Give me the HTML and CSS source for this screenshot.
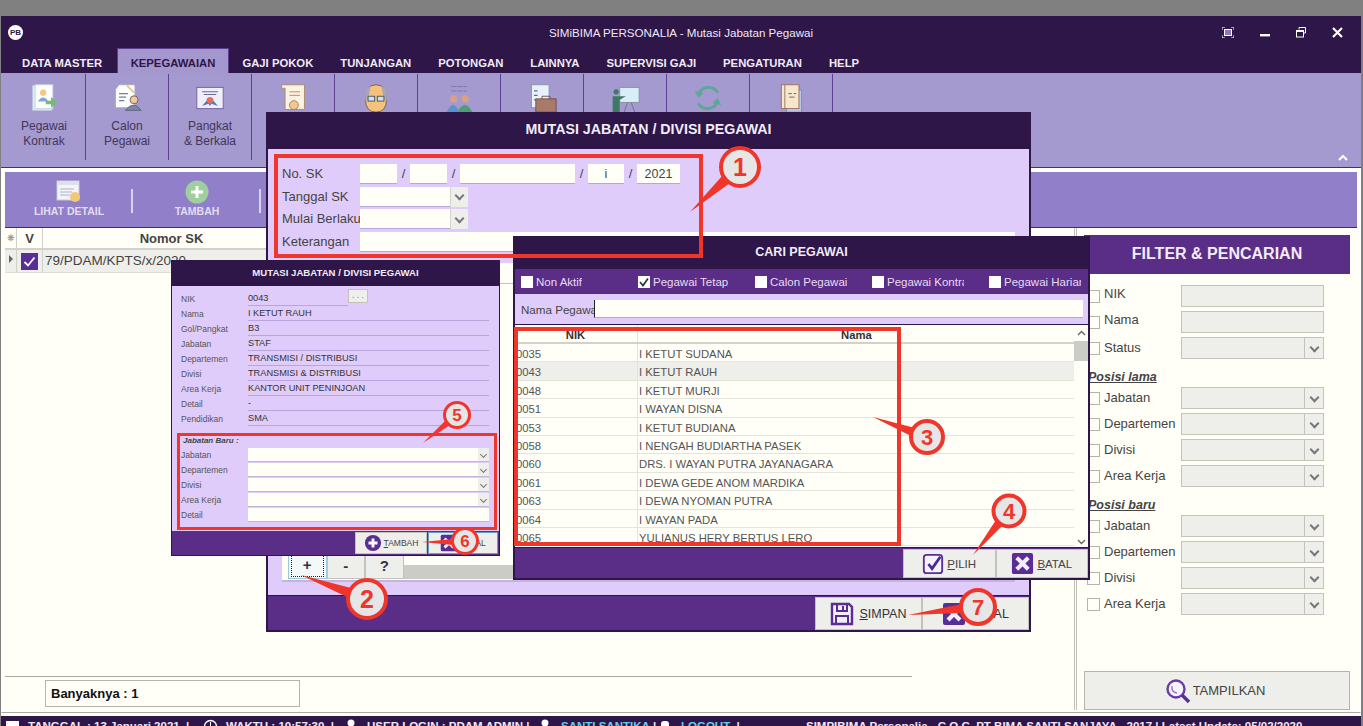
FILE: index.html
```html
<!DOCTYPE html>
<html lang="en">
<head>
  <meta charset="UTF-8">
  <title>SIMiBIMA PERSONALIA - Mutasi Jabatan Pegawai</title>
  <link rel="stylesheet" href="styles.css">
</head>

<body>
  <svg class="sprite">
    <symbol id="ico-x" viewBox="0 0 24 24">
      <rect x="1" y="1" width="22" height="22" rx="2" fill="#5a2d96"/>
      <path d="M6 6 L18 18 M18 6 L6 18" stroke="#f2eefa" stroke-width="4.2" fill="none"/>
    </symbol>
    <symbol id="ico-plus" viewBox="0 0 20 20">
      <circle cx="10" cy="10" r="9" fill="#5a2d96"/>
      <path d="M10 5 V15 M5 10 H15" stroke="#fff" stroke-width="3.2"/>
    </symbol>
    <symbol id="ico-check" viewBox="0 0 24 24">
      <rect x="2" y="2" width="20" height="20" rx="3" fill="#f4f2fa" stroke="#5a2d96" stroke-width="2"/>
      <path d="M7 12 L11 17 L20 4" stroke="#4a2a96" stroke-width="3" fill="none"/>
    </symbol>
    <symbol id="ico-save" viewBox="0 0 24 24">
      <path d="M2 2 H19 L22 5 V22 H2 Z" fill="#f2eefa" stroke="#5a2d96" stroke-width="2.4"/>
      <path d="M7 3 V9 H17 V3" fill="none" stroke="#5a2d96" stroke-width="2"/>
      <path d="M13 4 V8" stroke="#5a2d96" stroke-width="2"/>
      <path d="M6 22 V14 H18 V22" fill="none" stroke="#5a2d96" stroke-width="2"/>
    </symbol>
  </svg>

  <div class="app">
    <div class="titlebar">
      <div class="logo">PB</div>
      <div class="app-title">SIMiBIMA PERSONALIA - Mutasi Jabatan Pegawai</div>
      <div class="win-btns">
        <svg width="12" height="11" viewBox="0 0 12 11"><path d="M0 3 V0 H3 M9 0 H12 V3 M12 8 V11 H9 M3 11 H0 V8" fill="none" stroke="#fff"/><rect x="2.5" y="2.5" width="7" height="6" fill="#8a78b0" stroke="#fff"/></svg>
        <svg width="10" height="11" viewBox="0 0 10 11"><rect x="0" y="7" width="10" height="2.4" fill="#fff"/></svg>
        <svg width="10" height="11" viewBox="0 0 10 11"><path d="M3 2.5 V0.5 H9.5 V6 H7.5" fill="none" stroke="#fff"/><rect x="0.5" y="3.5" width="7" height="6.5" fill="none" stroke="#fff"/><rect x="0" y="3" width="8" height="2" fill="#fff"/></svg>
        <svg width="11" height="11" viewBox="0 0 11 11"><path d="M1 1 L10 10 M10 1 L1 10" stroke="#fff" stroke-width="2.2"/></svg>
      </div>
    </div>

    <div class="tabs">
      <div class="tab">DATA MASTER</div>
      <div class="tab active">KEPEGAWAIAN</div>
      <div class="tab">GAJI POKOK</div>
      <div class="tab">TUNJANGAN</div>
      <div class="tab">POTONGAN</div>
      <div class="tab">LAINNYA</div>
      <div class="tab">SUPERVISI GAJI</div>
      <div class="tab">PENGATURAN</div>
      <div class="tab">HELP</div>
    </div>

    <div class="ribbon">
      <div class="rb-item">
        <svg class="rb-icon" viewBox="0 0 34 34">
          <rect x="4" y="3" width="22" height="28" fill="#dfe8f5" stroke="#b9c8dd"/>
          <rect x="7" y="2" width="20" height="27" fill="#fdfdfb" stroke="#c9d4e4"/>
          <circle cx="16" cy="11" r="3.5" fill="#f5c77e"/>
          <path d="M10 21 Q16 12 22 21 Z" fill="#7ea6d8"/>
          <path d="M19 20 H25 V16 L32 22 L25 28 V24 H19 Z" fill="#79b77a"/>
        </svg>
        <div class="rb-label">Pegawai<br>Kontrak</div>
      </div>
      <div class="rb-item">
        <svg class="rb-icon" viewBox="0 0 34 34">
          <path d="M8 2 H26 V28 H4 V7 Z" fill="#fdfdfb" stroke="#aab"/>
          <path d="M8 12 H18 M8 16 H16 M8 20 H14" stroke="#6b7fa8" stroke-width="1.3"/>
          <path d="M17 3 L25 11" stroke="#e4c88a" stroke-width="2"/>
          <circle cx="25" cy="19" r="4.5" fill="#f1c9a0" stroke="#6a5a55"/>
          <path d="M15 31 Q25 19 33 31 Z" fill="#7d86a8" stroke="#5c6080"/>
        </svg>
        <div class="rb-label">Calon<br>Pegawai</div>
      </div>
      <div class="rb-item">
        <svg class="rb-icon" viewBox="0 0 34 34">
          <rect x="2" y="5" width="30" height="24" fill="#f0eefa" stroke="#7a6aa8" stroke-width="1.2"/>
          <path d="M8 10 H26 M10 13 H24" stroke="#6a6a90" stroke-width="1.2"/>
          <circle cx="17" cy="20" r="4" fill="#e56f5e"/>
          <path d="M8 26 L13 20 L17 26 L21 20 L26 26 L17 23 Z" fill="#4c7cc7"/>
        </svg>
        <div class="rb-label">Pangkat<br>&amp; Berkala</div>
      </div>
      <div class="rb-item">
        <svg class="rb-icon" viewBox="0 0 34 34">
          <path d="M6 2 H30 V30 H8 V6 H4 Q3 2 6 2 Z" fill="#fbf2df" stroke="#a9876b"/>
          <path d="M13 10 H25 M13 14 H25" stroke="#d66f62" stroke-width="1"/>
          <circle cx="18" cy="25" r="5" fill="#f0c98e" stroke="#b6705e"/>
        </svg>
      </div>
      <div class="rb-item">
        <svg class="rb-icon" viewBox="0 0 34 34">
          <path d="M5 18 Q5 2 17 2 Q29 2 29 18 Q29 33 17 33 Q5 33 5 18 Z" fill="#f5c27e" stroke="#6c5a4c"/>
          <path d="M5 20 Q3 5 11 4 L8 18 Z M29 20 Q31 5 23 4 L26 18 Z" fill="#a8a8b4"/>
          <rect x="8" y="15" width="7.5" height="5.5" fill="#cfe1ea" stroke="#3f4f5e"/>
          <rect x="18.5" y="15" width="7.5" height="5.5" fill="#cfe1ea" stroke="#3f4f5e"/>
        </svg>
      </div>
      <div class="rb-item">
        <svg class="rb-icon" viewBox="0 0 34 34">
          <path d="M8 4 H26 M8 9 H26" stroke="#7d72a8" stroke-width="1" stroke-dasharray="6 1"/>
          <circle cx="11" cy="18" r="4" fill="#d9a183"/>
          <circle cx="24" cy="18" r="4" fill="#d9a183"/>
          <path d="M3 33 Q11 17 17 33 Z" fill="#5b93cf"/>
          <path d="M15 33 Q24 17 32 33 Z" fill="#4f9e78"/>
        </svg>
      </div>
      <div class="rb-item">
        <svg class="rb-icon" viewBox="0 0 34 34">
          <rect x="5" y="2" width="20" height="26" fill="#e9f1fa" stroke="#7f93b8"/>
          <path d="M8 9 H12 M8 14 H12 M8 19 H12" stroke="#4f6aa8" stroke-width="1.4"/>
          <rect x="10" y="18" width="23" height="15" fill="#a97a6a" stroke="#6f4a48"/>
          <path d="M17 18 V15 H26 V18" fill="none" stroke="#6f4a48"/>
        </svg>
      </div>
      <div class="rb-item">
        <svg class="rb-icon" viewBox="0 0 34 34">
          <rect x="11" y="5" width="22" height="17" fill="#d7edf7" stroke="#8c8f9b"/>
          <circle cx="7" cy="10" r="3" fill="#3d7a65"/>
          <path d="M3 33 V15 H12 L18 15 L11 19 V33 Z" fill="#3d7a65"/>
          <path d="M20 22 L16 33 M24 22 L28 33" stroke="#6f6f7b"/>
        </svg>
      </div>
      <div class="rb-item">
        <svg class="rb-icon" viewBox="0 0 34 34">
          <path d="M6 14 A12 12 0 0 1 28 11" fill="none" stroke="#5aa895" stroke-width="3.2"/>
          <path d="M28 20 A12 12 0 0 1 6 23" fill="none" stroke="#5aa895" stroke-width="3.2"/>
          <path d="M2 9 L6 17 L12 11 Z M32 25 L28 17 L22 23 Z" fill="#5aa895"/>
        </svg>
      </div>
      <div class="rb-item">
        <svg class="rb-icon" viewBox="0 0 34 34">
          <rect x="12" y="8" width="17" height="25" fill="#b9c6e8" stroke="#7f8fb8"/>
          <rect x="6" y="2" width="20" height="27" fill="#f4e7cc" stroke="#9a6b5d"/>
          <path d="M10 2 V29" stroke="#9a6b5d"/>
          <path d="M14 12 H18 M20 12 H23 M15 16 H21" stroke="#6d5a55"/>
        </svg>
      </div>
      <svg class="rb-collapse" width="10" height="7" viewBox="0 0 10 7"><path d="M1 6 L5 2 L9 6" fill="none" stroke="#fff" stroke-width="2"/></svg>
    </div>

    <div class="content">
      <div class="toolbar">
        <div class="tool">
          <svg class="tool-icon" width="26" height="24" viewBox="0 0 26 24">
            <rect x="1" y="1" width="22" height="19" fill="#f4f4f8" stroke="#c8c8d8"/>
            <rect x="1" y="1" width="22" height="4" fill="#e0e0ea"/>
            <path d="M4 9 H18 M4 12 H16 M4 15 H14" stroke="#a8b4d0"/>
            <circle cx="19" cy="17" r="5" fill="#f0c878"/>
          </svg>
          <span>LIHAT DETAIL</span>
        </div>
        <div class="tool">
          <svg class="tool-icon" width="24" height="24" viewBox="0 0 24 24">
            <circle cx="12" cy="12" r="11.5" fill="#9fcf9e"/>
            <path d="M12 6 V18 M6 12 H18" stroke="#fff" stroke-width="3"/>
          </svg>
          <span>TAMBAH</span>
        </div>
      </div>

      <div class="work">
        <div class="list-side">
          <div class="grid">
            <div class="grid-head">
              <div class="cell cell-mark">❋</div>
              <div class="cell cell-v">V</div>
              <div class="cell cell-no">Nomor SK</div>
            </div>
            <div class="grid-row">
              <div class="cell cell-mark"><span class="row-arrow"></span></div>
              <div class="cell cell-v">
                <svg width="17" height="17" viewBox="0 0 17 17"><rect width="17" height="17" fill="#5a2d96"/><path d="M3.5 9 L7 12.5 L13.5 4.5" fill="none" stroke="#fff" stroke-width="1.8"/></svg>
              </div>
              <div class="cell cell-no">79/PDAM/KPTS/x/2020</div>
            </div>
          </div>
          <div class="count">Banyaknya : 1</div>
        </div>

        <div class="filter">
          <div class="filter-title">FILTER &amp; PENCARIAN</div>
          <div class="f-row f-row-top"><span class="f-check"></span><span class="f-label">NIK</span><span class="f-box"></span></div>
          <div class="f-row f-row-top"><span class="f-check"></span><span class="f-label">Nama</span><span class="f-box"></span></div>
          <div class="f-row"><span class="f-check"></span><span class="f-label">Status</span><span class="f-box drop"></span></div>
          <div class="f-head">Posisi lama</div>
          <div class="f-row"><span class="f-check"></span><span class="f-label">Jabatan</span><span class="f-box drop"></span></div>
          <div class="f-row"><span class="f-check"></span><span class="f-label">Departemen</span><span class="f-box drop"></span></div>
          <div class="f-row"><span class="f-check"></span><span class="f-label">Divisi</span><span class="f-box drop"></span></div>
          <div class="f-row"><span class="f-check"></span><span class="f-label">Area Kerja</span><span class="f-box drop"></span></div>
          <div class="f-head">Posisi baru</div>
          <div class="f-row"><span class="f-check"></span><span class="f-label">Jabatan</span><span class="f-box drop"></span></div>
          <div class="f-row"><span class="f-check"></span><span class="f-label">Departemen</span><span class="f-box drop"></span></div>
          <div class="f-row"><span class="f-check"></span><span class="f-label">Divisi</span><span class="f-box drop"></span></div>
          <div class="f-row"><span class="f-check"></span><span class="f-label">Area Kerja</span><span class="f-box drop"></span></div>
          <div class="show-btn">
            <svg width="26" height="26" viewBox="0 0 26 26">
              <circle cx="11" cy="11" r="8.5" fill="#f6f4fb" stroke="#6a3aa6" stroke-width="2.4"/>
              <path d="M7 8 Q6 14 12 15" fill="none" stroke="#9a7ac8" stroke-width="1.4"/>
              <path d="M17 17 L24 24" stroke="#5a2d96" stroke-width="3.4"/>
            </svg>
            <span>TAMPILKAN</span>
          </div>
        </div>
      </div>
    </div>

    <div class="statusbar">
      <div class="st st-date"><svg width="15" height="15" viewBox="0 0 15 15"><rect x="1" y="2" width="13" height="12" fill="#fff"/></svg><span>TANGGAL : 13 Januari 2021 &nbsp;|</span></div>
      <div class="st st-time"><svg width="15" height="15" viewBox="0 0 15 15"><circle cx="7.5" cy="7.5" r="6" fill="none" stroke="#fff" stroke-width="1.4"/><path d="M7.5 3 V8" stroke="#fff"/></svg><span>WAKTU : 10:57:30 &nbsp;|</span></div>
      <div class="st st-user"><svg width="15" height="15" viewBox="0 0 15 15"><circle cx="7" cy="4" r="3.5" fill="#fff"/></svg><span>USER LOGIN : PDAM ADMIN |</span></div>
      <div class="st st-name"><svg width="15" height="15" viewBox="0 0 15 15"><circle cx="7" cy="4" r="3.5" fill="#fff"/></svg><span><b class="st-link">SANTI SANTIKA</b> |</span></div>
      <div class="st st-out"><svg width="15" height="15" viewBox="0 0 15 15"><rect x="3" y="2" width="8" height="12" rx="3" fill="#fff"/></svg><span><b class="st-link">LOGOUT</b> &nbsp;|</span></div>
      <div class="st">SIMPIBIMA Personalia - C.O.C. PT BIMA SANTI SANJAYA - 2017 | Latest Update: 05/02/2020</div>
    </div>
  </div>

  <!-- dialog tengah -->
  <div class="dialog dlg-main">
    <div class="dlg-title">MUTASI JABATAN / DIVISI PEGAWAI</div>
    <div class="dlg-body">
      <div class="mark mark-form"></div>
      <div class="sk-form">
        <div class="sk-row">
          <label class="sk-label">No. SK</label>
          <span class="sk-in sk-w1"></span><span class="sk-sep">/</span>
          <span class="sk-in sk-w1"></span><span class="sk-sep sk-sep2">/</span>
          <span class="sk-in sk-w2"></span><span class="sk-sep">/</span>
          <span class="sk-in sk-w3">i</span><span class="sk-sep">/</span>
          <span class="sk-in sk-w4">2021</span>
        </div>
        <div class="sk-row"><label class="sk-label">Tanggal SK</label><span class="sk-in sk-date drop"></span></div>
        <div class="sk-row"><label class="sk-label">Mulai Berlaku</label><span class="sk-in sk-date drop"></span></div>
        <div class="sk-row"><label class="sk-label">Keterangan</label><span class="sk-in sk-full"></span></div>
      </div>
      <div class="sk-box">
        <div class="sk-box-head"></div>
        <div class="sk-box-foot">
          <div class="mini-btn focused"><span>+</span></div>
          <div class="mini-btn"><span>-</span></div>
          <div class="mini-btn"><span>?</span></div>
          <div class="sk-scroll"></div>
        </div>
      </div>
    </div>
    <div class="dlg-foot">
      <div class="btn btn-lg"><svg width="24" height="24"><use href="#ico-save"/></svg><span><u>S</u>IMPAN</span></div>
      <div class="btn btn-lg"><svg width="24" height="24"><use href="#ico-x"/></svg><span><u>B</u>ATAL</span></div>
    </div>
  </div>

  <!-- dialog kiri -->
  <div class="dialog dlg-left">
    <div class="dlg-title">MUTASI JABATAN / DIVISI PEGAWAI</div>
    <div class="dlg-body">
      <div class="mark mark-new"></div>
      <div class="info-list">
        <div class="info"><span class="info-k">NIK</span><span class="info-v info-nik">0043</span><span class="dots">. . .</span></div>
        <div class="info"><span class="info-k">Nama</span><span class="info-v">I KETUT RAUH</span></div>
        <div class="info"><span class="info-k">Gol/Pangkat</span><span class="info-v">B3</span></div>
        <div class="info"><span class="info-k">Jabatan</span><span class="info-v">STAF</span></div>
        <div class="info"><span class="info-k">Departemen</span><span class="info-v">TRANSMISI / DISTRIBUSI</span></div>
        <div class="info"><span class="info-k">Divisi</span><span class="info-v">TRANSMISI &amp; DISTRIBUSI</span></div>
        <div class="info"><span class="info-k">Area Kerja</span><span class="info-v">KANTOR UNIT PENINJOAN</span></div>
        <div class="info"><span class="info-k">Detail</span><span class="info-v">-</span></div>
        <div class="info"><span class="info-k">Pendidikan</span><span class="info-v">SMA</span></div>
      </div>
      <div class="new-head">Jabatan Baru :</div>
      <div class="info"><span class="info-k">Jabatan</span><span class="new-in drop"></span></div>
      <div class="info"><span class="info-k">Departemen</span><span class="new-in drop"></span></div>
      <div class="info"><span class="info-k">Divisi</span><span class="new-in drop"></span></div>
      <div class="info"><span class="info-k">Area Kerja</span><span class="new-in drop"></span></div>
      <div class="info"><span class="info-k">Detail</span><span class="new-in"></span></div>
    </div>
    <div class="dlg-foot">
      <div class="btn btn-sm"><svg width="18" height="18"><use href="#ico-plus"/></svg><span><u>T</u>AMBAH</span></div>
      <div class="btn btn-sm btn-focus"><svg width="18" height="18"><use href="#ico-x"/></svg><span><u>B</u>ATAL</span></div>
    </div>
  </div>

  <!-- dialog cari -->
  <div class="dialog dlg-search">
    <div class="dlg-title">CARI PEGAWAI</div>
    <div class="s-checks">
      <div class="s-check"><span class="s-box"></span><span class="s-text">Non Aktif</span></div>
      <div class="s-check">
        <svg class="s-tick" width="12" height="12" viewBox="0 0 12 12"><rect width="12" height="12" fill="#fff"/><path d="M2 6 L5 9.5 L10 2.5" fill="none" stroke="#333" stroke-width="1.7"/></svg>
        <span class="s-text">Pegawai Tetap</span>
      </div>
      <div class="s-check"><span class="s-box"></span><span class="s-text">Calon Pegawai</span></div>
      <div class="s-check"><span class="s-box"></span><span class="s-text">Pegawai Kontrak</span></div>
      <div class="s-check"><span class="s-box"></span><span class="s-text">Pegawai Harian</span></div>
    </div>
    <div class="s-search">
      <span class="s-name">Nama Pegawai</span>
      <span class="s-input"></span>
    </div>
    <div class="s-table">
      <div class="mark mark-table"></div>
      <div class="s-rows">
        <div class="s-row s-head"><span class="s-nik">NIK</span><span class="s-nama">Nama</span></div>
        <div class="s-row"><span class="s-nik">0035</span><span class="s-nama">I KETUT SUDANA</span></div>
        <div class="s-row s-sel"><span class="s-nik">0043</span><span class="s-nama">I KETUT RAUH</span></div>
        <div class="s-row"><span class="s-nik">0048</span><span class="s-nama">I KETUT MURJI</span></div>
        <div class="s-row"><span class="s-nik">0051</span><span class="s-nama">I WAYAN DISNA</span></div>
        <div class="s-row"><span class="s-nik">0053</span><span class="s-nama">I KETUT BUDIANA</span></div>
        <div class="s-row"><span class="s-nik">0058</span><span class="s-nama">I NENGAH BUDIARTHA PASEK</span></div>
        <div class="s-row"><span class="s-nik">0060</span><span class="s-nama">DRS. I WAYAN PUTRA JAYANAGARA</span></div>
        <div class="s-row"><span class="s-nik">0061</span><span class="s-nama">I DEWA GEDE ANOM MARDIKA</span></div>
        <div class="s-row"><span class="s-nik">0063</span><span class="s-nama">I DEWA NYOMAN PUTRA</span></div>
        <div class="s-row"><span class="s-nik">0064</span><span class="s-nama">I WAYAN PADA</span></div>
        <div class="s-row"><span class="s-nik">0065</span><span class="s-nama">YULIANUS HERY BERTUS LERO</span></div>
      </div>
      <div class="s-scrollbar">
        <svg width="9" height="6" viewBox="0 0 9 6"><path d="M1 5 L4.5 1.5 L8 5" fill="none" stroke="#666" stroke-width="1.4"/></svg>
        <span class="s-thumb"></span>
        <svg class="s-down" width="9" height="6" viewBox="0 0 9 6"><path d="M1 1 L4.5 4.5 L8 1" fill="none" stroke="#666" stroke-width="1.4"/></svg>
      </div>
    </div>
    <div class="dlg-foot">
      <div class="btn btn-md"><svg width="22" height="22"><use href="#ico-check"/></svg><span><u>P</u>ILIH</span></div>
      <div class="btn btn-md"><svg width="23" height="23"><use href="#ico-x"/></svg><span><u>B</u>ATAL</span></div>
    </div>
  </div>

  <!-- nomor petunjuk -->
  <svg class="callouts" width="1363" height="726" viewBox="0 0 1363 726">
    <g class="tail">
      <polygon points="690,212 730,183 723,175"/>
      <polygon points="301,575 347,597 351,588"/>
      <polygon points="873,417 911,436 915,428"/>
      <polygon points="973,555 1003,525 996,520"/>
      <polygon points="423,443 450,425 446,420"/>
      <polygon points="422,542 453,539 453,545"/>
      <polygon points="908,615 962,613 962,604"/>
    </g>
    <circle class="bubble" cx="740" cy="167" r="19"/>
    <text class="num num-lg" x="740" y="176">1</text>
    <circle class="bubble" cx="367" cy="599" r="19"/>
    <text class="num num-lg" x="367" y="608">2</text>
    <circle class="bubble" cx="927" cy="437" r="16"/>
    <text class="num num-md" x="927" y="445">3</text>
    <circle class="bubble" cx="1009" cy="511" r="15.5"/>
    <text class="num num-md" x="1009" y="519">4</text>
    <circle class="bubble bubble-sm" cx="457" cy="415" r="12.5"/>
    <text class="num num-sm" x="457" y="421">5</text>
    <circle class="bubble bubble-sm" cx="465" cy="541" r="12.5"/>
    <text class="num num-sm" x="465" y="547">6</text>
    <circle class="bubble" cx="978" cy="607" r="17"/>
    <text class="num num-md" x="978" y="615">7</text>
  </svg>
</body>
</html>
```

FILE: styles.css
```css
* {
  box-sizing: border-box;
}

html, body {
  height: 726px;
  overflow: hidden;
}

body {
  margin: 0;
  padding-top: 16px;
  background: #808080;
  color: #444;
  font-family: 'Liberation Sans', Arial, sans-serif;
  position: relative;
}

.sprite {
  display: none;
}

.app {
  width: 1360px;
  height: 710px;
  margin-left: 1px;
  background: #fffff8;
  display: flex;
  flex-direction: column;
}

.titlebar {
  height: 32px;
  flex: none;
  background: #2e1648;
  display: grid;
  grid-template-columns: 1fr auto 1fr;
  align-items: center;
  color: #eee8f5;
  font-size: 11.6px;
}

.logo {
  width: 15px;
  height: 15px;
  margin-left: 7px;
  border-radius: 50%;
  background: #fff;
  color: #2e1648;
  font-size: 8px;
  font-weight: bold;
  line-height: 15px;
  text-align: center;
}

.win-btns {
  display: flex;
  justify-content: flex-end;
  align-items: center;
  gap: 26px;
  padding-right: 18px;
}

.tabs {
  height: 25px;
  flex: none;
  background: #2e1648;
  display: flex;
  padding-left: 7.5px;
}

.tab {
  padding: 0 13.5px;
  color: #f0eaf6;
  font-size: 11.3px;
  font-weight: bold;
  line-height: 30px;
}

.tab:first-child {
  padding-right: 15px;
}

.tab.active {
  background: #a497ce;
  color: #2e1648;
  border: 1px solid #5a3d8c;
  border-bottom: none;
  padding: 0 12.5px;
  line-height: 28px;
}

.ribbon {
  height: 95px;
  flex: none;
  position: relative;
  display: flex;
  padding-left: 2px;
  background: #a49acf;
  border-top: 1px solid #b08fdb;
  border-bottom: 1px solid #4a2f78;
}

.rb-item {
  width: 83px;
  height: 86px;
  border-right: 1px solid #5f4193;
  text-align: center;
  color: #3f3658;
  font-size: 12px;
  line-height: 15px;
}

.rb-icon {
  display: block;
  width: 30px;
  height: 30px;
  margin: 9px auto 0;
}

.rb-label {
  margin-top: 6px;
}

.rb-collapse {
  position: absolute;
  right: 13px;
  bottom: 6px;
}

.content {
  flex: 1;
  min-height: 0;
  display: flex;
  flex-direction: column;
  padding: 3px 3px 2px 3px;
  border: 1px solid #fff;
  border-bottom: 1px solid #a8a8a0;
}

.toolbar {
  height: 56px;
  flex: none;
  display: flex;
  background: #9180c9;
  border-bottom: 1px solid #3f2a70;
}

.tool {
  width: 128px;
  height: 55px;
  position: relative;
  display: flex;
  flex-direction: column;
  align-items: center;
  padding-top: 8px;
  color: #e2dcf2;
  font-size: 10.5px;
  font-weight: bold;
}

.tool::after {
  content: "";
  position: absolute;
  right: 0;
  top: 17px;
  width: 2px;
  height: 24px;
  background: #d8d4ea;
}

.tool span {
  margin-top: 1px;
}

.work {
  flex: 1;
  min-height: 0;
  display: flex;
}

.list-side {
  width: 1072px;
  flex: none;
  border-right: 3px double #c0c0b8;
  padding-bottom: 3px;
  display: flex;
  flex-direction: column;
}

.grid {
  flex: 1;
  width: 907px;
  border-bottom: 1px solid #aaaaa2;
}

.grid-head, .grid-row {
  display: flex;
  width: 1069px;
}

.grid-head {
  height: 22px;
  border-bottom: 2px solid #d2d2ca;
  font-size: 13px;
  font-weight: bold;
  line-height: 21px;
}

.grid-row {
  height: 23px;
  background: #eeeeea;
  border-bottom: 1px solid #dcdcd4;
  font-size: 13.5px;
  line-height: 21px;
}

.cell {
  flex: none;
  border-right: 1px solid #d2d2ca;
  text-align: center;
  overflow: hidden;
}

.cell-mark {
  width: 12px;
  color: #888;
  font-size: 9px;
  font-weight: normal;
}

.cell-v {
  width: 26px;
}

.cell-v svg {
  display: block;
  margin: 3px auto 0;
}

.cell-no {
  width: 258px;
}

.grid-row .cell-no {
  text-align: left;
  padding-left: 2px;
}

.row-arrow {
  display: inline-block;
  border-left: 4px solid #666;
  border-top: 4px solid transparent;
  border-bottom: 4px solid transparent;
}

.count {
  width: 255px;
  height: 27px;
  flex: none;
  margin: 3px 0 0 40px;
  border: 1px solid #b4b4ac;
  padding-left: 5px;
  color: #111;
  font-size: 13px;
  font-weight: bold;
  line-height: 25px;
}

.filter {
  flex: 1;
  display: flex;
  flex-direction: column;
  padding: 7px 7px 0 7px;
}

.filter-title {
  height: 39px;
  flex: none;
  margin-bottom: 11px;
  background: #5a2d86;
  color: #f2ecf8;
  font-size: 16px;
  font-weight: bold;
  line-height: 38px;
  text-align: center;
}

.f-row {
  height: 22px;
  flex: none;
  margin-bottom: 4px;
  display: flex;
  align-items: center;
  font-size: 13px;
}

.f-label {
  width: 77px;
  margin-left: 4px;
  padding-bottom: 2px;
}

.f-row-top .f-label {
  padding-bottom: 5px;
}

.f-check {
  width: 13px;
  height: 13px;
  margin-left: 3px;
  background: #fffff8;
  border: 1px solid #b4b4ac;
}

.f-box {
  width: 143px;
  height: 22px;
  position: relative;
  background: #eeeeea;
  border: 1px solid #c3c3bb;
}

.f-head {
  height: 24px;
  flex: none;
  padding: 7px 0 0 4px;
  font-size: 12.5px;
  font-weight: bold;
  font-style: italic;
  text-decoration: underline;
}

.drop::before {
  content: "";
  position: absolute;
  top: -1px;
  right: -1px;
  bottom: -1px;
  width: 18px;
  background: #eeeeea;
  border: 1px solid #c3c3bb;
}

.drop::after {
  content: "";
  position: absolute;
  top: 50%;
  right: 5px;
  width: 5px;
  height: 5px;
  margin-top: -4px;
  border-right: 2px solid #777;
  border-bottom: 2px solid #777;
  transform: rotate(45deg);
}

.show-btn {
  height: 39px;
  flex: none;
  margin-top: auto;
  display: flex;
  align-items: center;
  justify-content: center;
  gap: 2px;
  padding-right: 4px;
  background: #eeeeea;
  border: 1px solid #b4b4ac;
  font-size: 13px;
}

.statusbar {
  height: 10px;
  flex: none;
  margin-top: 3px;
  display: flex;
  overflow: hidden;
  padding: 4px 0 0 4px;
  background: #2e1648;
  color: #eee8f5;
  font-size: 11.5px;
  font-weight: bold;
  white-space: nowrap;
}

.st {
  display: flex;
  gap: 8px;
  flex: none;
  height: 15px;
}

.st svg {
  margin-top: -1px;
}

.st-date { width: 198px; }
.st-time { width: 141px; }
.st-user { width: 194px; }
.st-name { width: 120px; }
.st-out { width: 148px; }

.st-link {
  color: #5fd0f0;
}

.dialog {
  position: absolute;
  display: flex;
  flex-direction: column;
  border: 2px solid #2e1648;
  background: #e0ccfa;
}

.dlg-title {
  flex: none;
  background: #2e1648;
  color: #f2ecf8;
  font-weight: bold;
  text-align: center;
}

.dlg-body {
  flex: 1;
  min-height: 0;
  position: relative;
}

.dlg-foot {
  flex: none;
  display: flex;
  justify-content: flex-end;
  background: #5a2d86;
}

.btn {
  display: flex;
  align-items: center;
  justify-content: center;
  background: #eeeeea;
  border: 1px solid #c3c3bb;
}

.mark {
  position: absolute;
  border: 3px solid #f0352b;
  z-index: 2;
}

.dlg-main {
  left: 266px;
  top: 112px;
  width: 765px;
  height: 520px;
}

.dlg-main .dlg-title {
  height: 35px;
  font-size: 14.2px;
  line-height: 31px;
}

.mark-form {
  left: 6px;
  top: 5px;
  width: 429px;
  height: 104px;
  border-width: 4px;
}

.sk-form {
  padding: 15px 14px 0;
}

.sk-row {
  height: 20px;
  margin-bottom: 2.5px;
  display: flex;
  font-size: 13px;
  line-height: 20px;
}

.sk-label {
  width: 78px;
  flex: none;
  white-space: nowrap;
}

.sk-in {
  position: relative;
  background: #fffff8;
  border-bottom: 1px solid #b9a5dc;
  text-align: center;
  font-size: 12.5px;
}

.sk-w1 { width: 37px; }
.sk-w2 { width: 115px; }
.sk-w3 { width: 36px; }
.sk-w4 { width: 43px; }
.sk-date { width: 108px; }
.sk-full { width: 656px; }

.sk-sep {
  width: 13px;
  text-align: center;
  font-size: 13px;
}

.sk-in.drop::before {
  top: 0;
  right: 0;
  bottom: -1px;
  width: 17px;
  border: none;
  border-left: 1px solid #d4d4cc;
}

.sk-box {
  height: 319px;
  margin: 11px 14px 0;
  display: flex;
  flex-direction: column;
  justify-content: space-between;
  background: #fffff8;
  border-bottom: 2px solid #c4b4da;
}

.sk-box-head {
  height: 21px;
  border-bottom: 1px solid #c3c3bb;
}

.sk-box-foot {
  display: flex;
  align-items: flex-end;
  padding: 0 0 1px 6px;
}

.mini-btn {
  width: 38.5px;
  height: 25px;
  background: #eeeeea;
  border: 1px solid #c3c3bb;
  color: #33304a;
  font-size: 15px;
  font-weight: bold;
  line-height: 21px;
  text-align: center;
}

.mini-btn.focused {
  background: #f4f8f8;
  border-color: #9cc8e0;
}

.mini-btn.focused span {
  display: block;
  height: 22px;
  margin: 0 2px;
  border: 1px dotted #222;
  border-top: none;
  line-height: 19px;
}

.sk-scroll {
  width: 541px;
  height: 14px;
  background: #ccccc6;
}

.dlg-main .dlg-foot {
  height: 35px;
  padding: 1px 0 0;
  border-top: 1px solid #2e1648;
}

.btn-lg {
  width: 107px;
  gap: 5px;
  font-size: 12.5px;
  color: #333;
}

.dlg-left {
  left: 171px;
  top: 260px;
  width: 329px;
  height: 296px;
  border-width: 1px;
}

.dlg-left .dlg-title {
  height: 25px;
  font-size: 9.6px;
  line-height: 23px;
}

.dlg-left .dlg-body {
  padding: 5px 10px 0 9px;
}

.mark-new {
  left: 5px;
  top: 147px;
  width: 320px;
  height: 97px;
}

.info {
  height: 15px;
  display: flex;
  font-size: 8.5px;
  line-height: 14px;
}

.info-k {
  width: 67px;
  flex: none;
  color: #555;
}

.info-list .info-k {
  line-height: 16px;
}

.info-v {
  flex: 1;
  border-bottom: 1px solid #b9a5dc;
  color: #333;
  font-size: 9.2px;
  line-height: 14px;
}

.info-nik {
  flex: none;
  width: 100px;
}

.dots {
  width: 20px;
  height: 14px;
  margin-top: -2px;
  background: #eeeeea;
  border: 1px solid #c3c3bb;
  color: #777;
  line-height: 11px;
  text-align: center;
}

.new-head {
  height: 12px;
  margin-top: 10px;
  padding-left: 2px;
  color: #444;
  font-size: 8px;
  font-weight: bold;
  font-style: italic;
}

.new-in {
  flex: 1;
  height: 14px;
  position: relative;
  background: #fffff8;
  border-bottom: 1px solid #c4b4da;
}

.new-in.drop::before {
  top: 0;
  right: 0;
  bottom: 0;
  width: 11px;
  border: none;
}

.new-in.drop::after {
  right: 3px;
  width: 4px;
  height: 4px;
  margin-top: -3px;
  border-width: 1px;
}

.dlg-left .dlg-foot {
  height: 24px;
  padding: 1px 1px 1px 0;
}

.btn-sm {
  width: 72px;
  gap: 2px;
  font-size: 8.5px;
  color: #444;
}

.btn-focus {
  width: 70px;
  margin-left: 1px;
  border-color: #6a9cc8;
}

.dlg-search {
  left: 513px;
  top: 236px;
  width: 577px;
  height: 344px;
}

.dlg-search .dlg-title {
  height: 31px;
  font-size: 12.5px;
  line-height: 28px;
}

.s-checks {
  height: 25px;
  flex: none;
  display: flex;
  padding: 1px 0 0 6px;
  background: #5a2d86;
}

.s-check {
  width: 117px;
  flex: none;
  display: flex;
  align-items: center;
  gap: 3px;
  color: #e8dcf5;
  font-size: 11.5px;
}

.s-box {
  width: 12px;
  height: 12px;
  flex: none;
  background: #fff;
}

.s-tick {
  flex: none;
}

.s-text {
  max-width: 77px;
  overflow: hidden;
  white-space: nowrap;
}

.s-search {
  height: 31px;
  flex: none;
  display: flex;
  align-items: center;
  padding-left: 6px;
  border-bottom: 1px solid #2e1648;
  font-size: 11.6px;
}

.s-name {
  width: 73px;
  flex: none;
  overflow: hidden;
  white-space: nowrap;
}

.s-input {
  width: 489px;
  height: 18px;
  background: #fffff8;
  border-left: 1px solid #222;
  border-bottom: 1px solid #b9a5dc;
}

.s-table {
  flex: 1;
  min-height: 0;
  position: relative;
  display: flex;
  background: #fffff8;
}

.mark-table {
  left: -1px;
  top: 2px;
  width: 387px;
  height: 219px;
  border-width: 4px;
}

.s-rows {
  flex: 1;
  overflow: hidden;
  font-size: 11.3px;
}

.s-row {
  height: 18.4px;
  display: flex;
  border-bottom: 1px solid #e4e4dc;
  line-height: 20px;
  color: #555;
}

.s-head {
  height: 19px;
  border-bottom: 2px solid #d2d2ca;
  color: #333;
  font-weight: bold;
  line-height: 21px;
  text-align: center;
}

.s-sel {
  background: #eeeeea;
}

.s-nik {
  width: 123px;
  flex: none;
  padding-left: 1px;
  border-right: 1px solid #e4e4dc;
}

.s-nama {
  flex: 1;
  padding-left: 1px;
}

.s-head .s-nik {
  padding-right: 2px;
}

.s-head .s-nama {
  padding-right: 0;
  width: 436px;
}

.s-scrollbar {
  width: 14px;
  flex: none;
  display: flex;
  flex-direction: column;
  align-items: center;
  padding-top: 5px;
}

.s-thumb {
  width: 14px;
  height: 20px;
  margin-top: 5px;
  background: #ccccc6;
}

.s-down {
  margin-top: auto;
  margin-bottom: 2px;
}

.dlg-search .dlg-foot {
  height: 31px;
  padding: 1px 0 0;
  border-top: 1px solid #2e1648;
}

.btn-md {
  width: 92.5px;
  gap: 3px;
  font-size: 11.5px;
  color: #444;
}

.callouts {
  position: absolute;
  left: 0;
  top: 0;
}

.tail {
  fill: #f0352b;
}

.bubble {
  fill: #e6e6e6;
  stroke: #f0352b;
  stroke-width: 4;
}

.bubble-sm {
  stroke-width: 3;
}

.num {
  fill: #f0352b;
  font-family: 'Liberation Sans', Arial, sans-serif;
  font-weight: bold;
  text-anchor: middle;
}

.num-lg { font-size: 25px; }
.num-md { font-size: 22px; }
.num-sm { font-size: 17px; }
```
